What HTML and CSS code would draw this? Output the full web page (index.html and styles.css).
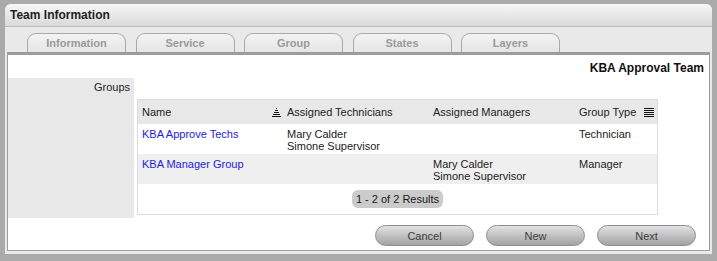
FILE: index.html
```html
<!DOCTYPE html>
<html lang="en">
<head>
    <meta charset="UTF-8">
    <title>Team Information</title>
    <link rel="stylesheet" href="styles.css">
</head>
<body>
    <div class="window">
        <div class="titlebar">Team Information</div>
        <div class="tabs">
            <div class="tab">Information</div>
            <div class="tab">Service</div>
            <div class="tab">Group</div>
            <div class="tab">States</div>
            <div class="tab">Layers</div>
        </div>
        <div class="panel">
            <div class="panel-heading">KBA Approval Team</div>
            <div class="form-row">
                <div class="form-label">Groups</div>
                <div class="form-value">
                    <div class="grid-box">
                        <table class="grid">
                            <colgroup>
                                <col class="col-name">
                                <col class="col-tech">
                                <col class="col-mgr">
                                <col class="col-type">
                            </colgroup>
                            <thead>
                                <tr>
                                    <th class="th-sort">
                                        <div class="th-inner">
                                            <span>Name</span>
                                            <svg class="sort-icon" width="9" height="10" viewBox="0 0 9 10">
                                                <rect x="4" y="1" width="1" height="1"/>
                                                <rect x="3" y="3" width="3" height="1"/>
                                                <rect x="2" y="5" width="5" height="1"/>
                                                <rect x="1" y="7" width="7" height="1"/>
                                                <rect x="0" y="9" width="9" height="1"/>
                                            </svg>
                                        </div>
                                    </th>
                                    <th>Assigned Technicians</th>
                                    <th>Assigned Managers</th>
                                    <th class="th-type">
                                        Group Type
                                        <svg class="menu-icon" width="10" height="10" viewBox="0 0 10 10">
                                            <rect x="0" y="1" width="10" height="1"/>
                                            <rect x="0" y="3" width="10" height="1"/>
                                            <rect x="0" y="5" width="10" height="1"/>
                                            <rect x="0" y="7" width="10" height="1"/>
                                            <rect x="0" y="9" width="10" height="1"/>
                                        </svg>
                                    </th>
                                </tr>
                            </thead>
                            <tbody>
                                <tr>
                                    <td><a href="#">KBA Approve Techs</a></td>
                                    <td>Mary Calder<br>Simone Supervisor</td>
                                    <td></td>
                                    <td>Technician</td>
                                </tr>
                                <tr class="alt">
                                    <td><a href="#">KBA Manager Group</a></td>
                                    <td></td>
                                    <td>Mary Calder<br>Simone Supervisor</td>
                                    <td>Manager</td>
                                </tr>
                            </tbody>
                        </table>
                        <div class="pager"><span class="pager-pill">1 - 2 of 2 Results</span></div>
                    </div>
                </div>
            </div>
            <div class="actions">
                <button class="btn">Cancel</button>
                <button class="btn">New</button>
                <button class="btn">Next</button>
            </div>
        </div>
    </div>
</body>
</html>
```

FILE: styles.css
```css
html, body {
    margin: 0;
    padding: 0;
}

body {
    background: #aaaaaa;
    padding: 4px 5px 0 5px;
    height: 261px;
    box-sizing: border-box;
    overflow: hidden;
    font-family: "Liberation Sans", Arial, sans-serif;
    font-size: 11px;
    color: #222;
}

.window {
    background: #e9e9e9;
    border-radius: 6px 6px 0 0;
    padding-bottom: 3px;
}

.titlebar {
    height: 22px;
    line-height: 22px;
    padding-left: 5px;
    font-size: 12px;
    font-weight: bold;
    color: #1e1e1e;
    background: linear-gradient(#f7f7f7, #d9d9d9);
    border-bottom: 1px solid #bcbcbc;
    border-radius: 6px 6px 0 0;
}

.tabs {
    display: flex;
    gap: 9.5px;
    padding: 6px 0 0 22px;
}

.tab {
    width: 99px;
    height: 19px;
    line-height: 19px;
    box-sizing: border-box;
    border: 1px solid #a9a9a9;
    border-bottom: none;
    border-radius: 9px 9px 0 0;
    background: linear-gradient(#f3f3f3, #e5e5e5);
    color: #9a9a9a;
    font-weight: bold;
    text-align: center;
}

.panel {
    margin: 0 2px;
    background: #fff;
    border-top: 3px solid #9c9c9c;
    border-left: 1px solid #9c9c9c;
    border-right: 1px solid #9c9c9c;
    border-bottom: 1px solid #a3a3a3;
    padding-bottom: 4px;
}

.panel-heading {
    text-align: right;
    font-size: 12px;
    font-weight: bold;
    line-height: 14px;
    padding: 6px 5px 3px 0;
    color: #111;
}

.form-row {
    display: flex;
    height: 140px;
}

.form-label {
    width: 126px;
    box-sizing: border-box;
    background: #e8e8e8;
    text-align: right;
    padding: 3px 4px 0 0;
    line-height: 13px;
}

.form-value {
    padding: 21px 0 0 3px;
}

.grid-box {
    width: 519px;
    border: 1px solid #dcdcdc;
}

.grid {
    width: 519px;
    border-collapse: collapse;
    table-layout: fixed;
}

.col-name { width: 145px; }
.col-tech { width: 146px; }
.col-mgr { width: 146px; }
.col-type { width: 82px; }

.grid th {
    height: 24px;
    padding: 0 4px;
    background: #e8e8e8;
    font-weight: normal;
    text-align: left;
    vertical-align: middle;
    white-space: nowrap;
}

.grid th.th-sort {
    padding-right: 2px;
}

.th-inner {
    display: flex;
    align-items: center;
    justify-content: space-between;
}

.sort-icon,
.menu-icon {
    fill: #111;
    display: inline-block;
}

.menu-icon {
    margin-left: 5px;
    vertical-align: -1px;
}

.grid td {
    height: 24px;
    padding: 4px 4px 2px 4px;
    line-height: 12px;
    vertical-align: top;
}

.grid tr.alt td {
    background: #efefef;
}

.grid a {
    color: #1a1aee;
    text-decoration: none;
}

.pager {
    text-align: center;
    padding: 6px 0;
}

.pager-pill {
    display: inline-block;
    height: 18px;
    line-height: 18px;
    padding: 0 4px;
    background: #cbcbcb;
    border-radius: 6px;
    color: #1a1a1a;
}

.actions {
    display: flex;
    justify-content: flex-end;
    gap: 12px;
    padding: 7px 13px 0 0;
}

.btn {
    width: 99px;
    height: 21px;
    border: 1px solid #8e8e8e;
    border-radius: 11px;
    background: linear-gradient(#e2e2e2, #c2c2c2 50%, #a3a3a3);
    color: #3d3d3d;
    font-family: "Liberation Sans", Arial, sans-serif;
    font-size: 11px;
    padding: 0;
}
```
